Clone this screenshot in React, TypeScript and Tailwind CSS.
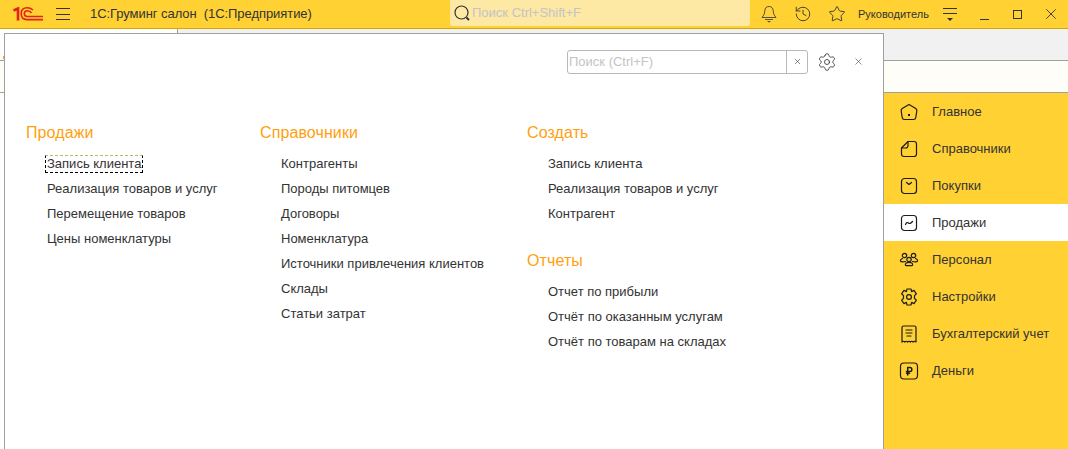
import { History, Star, Settings, X } from "lucide-react";

const sideItems = ["Главное", "Справочники", "Покупки", "Продажи", "Персонал", "Настройки", "Бухгалтерский учет", "Деньги"];

const SideIcon = ({ index }: { index: number }) => {
  const common = { width: 20, height: 20, viewBox: "0 0 20 20", fill: "none", stroke: "#1c1c1c", strokeWidth: 1.2, strokeLinejoin: "round" as const, strokeLinecap: "round" as const };
  switch (index) {
    case 0:
      return (
        <svg {...common}>
          <path d="M10 2.5 L16.8 6.5 Q18 7.3 17.8 9 L16.8 15.5 Q16.5 17.5 14.5 17.5 H5.5 Q3.5 17.5 3.2 15.5 L2.2 9 Q2 7.3 3.2 6.5 Z" />
          <rect x="9" y="12" width="2" height="2" fill="#1c1c1c" stroke="none" />
        </svg>
      );
    case 1:
      return (
        <svg {...common}>
          <path d="M9 2.5 H15 Q17.5 2.5 17.5 5 V15 Q17.5 17.5 15 17.5 H5 Q2.5 17.5 2.5 15 V9 Z" />
          <path d="M2.5 9 H6.5 Q9 9 9 6.5 V2.5" />
        </svg>
      );
    case 2:
      return (
        <svg {...common}>
          <rect x="2.5" y="2.5" width="15" height="15" rx="3" />
          <path d="M7.5 6.5 L10 8.5 L12.5 6.5" />
        </svg>
      );
    case 3:
      return (
        <svg {...common}>
          <rect x="2.5" y="2.5" width="15" height="15" rx="3" />
          <path d="M6.5 11.5 Q8 8.5 9.5 10 T13.5 8.5" />
        </svg>
      );
    case 4:
      return (
        <svg {...common}>
          <circle cx="5.5" cy="5.5" r="2.2" />
          <circle cx="14.5" cy="5.5" r="2.2" />
          <circle cx="10" cy="9.5" r="2.2" />
          <path d="M3.5 8.5 Q1 9.5 1.5 11 Q2 12.3 6.5 11.5" />
          <path d="M16.5 8.5 Q19 9.5 18.5 11 Q18 12.3 13.5 11.5" />
          <path d="M7 13 Q5.5 15.5 7.5 15.7 H12.5 Q14.5 15.5 13 13 Q10 11.8 7 13 Z" />
        </svg>
      );
    case 5:
      return (
        <svg {...common}>
          <path d="M8 2 H12 L12.6 4.6 L15 3.4 L17.4 6.8 L15.5 8.6 V11.4 L17.4 13.2 L15 16.6 L12.6 15.4 L12 18 H8 L7.4 15.4 L5 16.6 L2.6 13.2 L4.5 11.4 V8.6 L2.6 6.8 L5 3.4 L7.4 4.6 Z" />
          <circle cx="10" cy="10" r="2.4" />
        </svg>
      );
    case 6:
      return (
        <svg {...common}>
          <path d="M3 18 V3.5 Q3 2 4.5 2 H15.5 Q17 2 17 3.5 V18 Q15.6 16.5 14.2 18 Q12.8 16.5 11.4 18 Q10 16.5 8.6 18 Q7.2 16.5 5.8 18 Q4.4 16.5 3 18 Z" />
          <path d="M7 6 H13 M7 9 H13 M8 12 H12" />
        </svg>
      );
    default:
      return (
        <svg {...common}>
          <rect x="1.5" y="2" width="17" height="16" rx="3.5" />
          <path d="M8.7 14 V6.5 H11 Q12.8 6.5 12.8 8.5 Q12.8 10.5 11 10.5 H7.5 M7.5 12.3 H10.5" strokeWidth={1.5} />
        </svg>
      );
  }
};

const Logo = () => (
  <svg width="30" height="14" viewBox="0 0 30 14" fill="none" stroke="#e2231a" className="-mt-[1px]">
    <path d="M0.5 3.5 L5 1.5 V13.5" strokeWidth="2.6" />
    <path d="M20 3 Q17.5 0.8 14 0.8 Q8.2 0.8 8.2 6.6 Q8.2 12.6 14 12.6 H30" strokeWidth="1.6" />
    <path d="M18.5 6 Q17 3.8 14.5 3.8 Q11.3 3.8 11.3 6.7 Q11.3 9.5 14.5 9.5 H30" strokeWidth="1.6" />
  </svg>
);

const BellIcon = () => (
  <svg width="16" height="18" viewBox="0 0 16 18" fill="none" stroke="#444444" strokeWidth="0.9" strokeLinejoin="round">
    <path d="M8 1.5 Q4 1.5 3.8 6 Q3.7 10 1 12.5 H15 Q12.3 10 12.2 6 Q12 1.5 8 1.5 Z" />
    <path d="M4 14.5 H12" />
    <path d="M6 16 H10 L8 17.5 Z" fill="#444444" stroke="none" />
  </svg>
);

const Section = ({ title, items, className = "" }: { title: string; items: string[]; className?: string }) => (
  <div className={className}>
    <h2 className="text-[16px] leading-[20px] tracking-[0.1px] text-[#ff9f10]">{title}</h2>
    <ul className="mt-[8px] pl-[21px]">
      {items.map((item, i) => (
        <li key={item} className="h-[25px] leading-[25px] whitespace-nowrap">
          {title === "Продажи" && i === 0 ? (
            <span className="-ml-[2px] inline-block h-[18px] leading-[16px] pl-[1px] pr-[1px] align-middle -mt-[2px] border border-dashed border-black border-t-[#b9b96a]">{item}</span>
          ) : (
            item
          )}
        </li>
      ))}
    </ul>
  </div>
);

export default function App() {
  return (
    <div className="w-[1068px] h-[449px] overflow-hidden flex flex-col bg-white text-[13px] text-[#333333] font-['Liberation_Sans',Arial,sans-serif]">
      <header className="h-[29px] shrink-0 flex items-center bg-[#ffd133] border-b border-[#d4a60a]">
        <div className="ml-[13px] w-[30px] flex"><Logo /></div>
        <div className="ml-[13px] w-[14px] flex flex-col gap-[4.5px]">
          <div className="h-px bg-[#333333]" />
          <div className="h-px bg-[#333333]" />
          <div className="h-px bg-[#333333]" />
        </div>
        <div className="ml-[20px] w-[360px] text-[13px] tracking-[-0.06px] whitespace-pre">1С:Груминг салон  (1С:Предприятие)</div>
        <div className="w-[300px] h-[26px] -mt-[3px] flex items-center bg-[#fde8a4] rounded-b-[2px]">
          <svg width="20" height="20" viewBox="0 0 20 20" fill="none" stroke="#333333" className="ml-[2px]">
            <circle cx="9.5" cy="9.5" r="6.5" strokeWidth="1.2" />
            <path d="M14.5 14.5 L17 17" strokeWidth="2" />
          </svg>
          <span className="text-[#c4c4c4]">Поиск Ctrl+Shift+F</span>
        </div>
        <div className="ml-[11px] flex"><BellIcon /></div>
        <History size={18} strokeWidth={1.2} className="ml-[17px]" />
        <Star size={18} strokeWidth={1.2} className="ml-[16px]" />
        <span className="ml-[12px] text-[11px] text-[#333333]">Руководитель</span>
        <div className="ml-[14px] w-[14px] flex flex-col items-center gap-[4px]">
          <div className="h-px w-[14px] bg-[#333333]" />
          <div className="h-px w-[14px] bg-[#333333]" />
          <div className="w-0 h-0 border-x-[3px] border-t-[3px] border-x-transparent border-t-[#333333]" />
        </div>
        <div className="ml-[23px] mt-[10px] w-[9px] h-px bg-[#333333]" />
        <div className="ml-[24px] w-[9px] h-[9px] border border-[#333333]" />
        <svg width="10" height="10" viewBox="0 0 10 10" stroke="#333333" strokeWidth="0.9" className="ml-[24px]">
          <path d="M0.3 0.3 L9.7 9.7 M9.7 0.3 L0.3 9.7" />
        </svg>
      </header>

      <div className="relative flex-1 flex flex-col min-h-0">
        <div className="h-[32px] shrink-0 flex border-b border-[#a0a0a0]">
          <div className="relative w-[178px] border-r border-[#a0a0a0]">
            <div className="absolute left-[3px] bottom-[1px] w-px h-[3px] bg-[#ff9f10]" />
          </div>
          <div className="flex-1 bg-[#f1f1f1]" />
        </div>
        <div className="h-[32px] shrink-0 bg-[#fffdf7] border-b border-[#a0a0a0]" />
        <div className="flex-1 flex min-h-0">
          <div className="flex-1" />
          <nav className="w-[185px] bg-[#ffd133] border-l border-[#a0a0a0]">
            {sideItems.map((item, i) => (
              <div key={item} className={`h-[37px] flex items-center pl-[15px] ${i === 3 ? "bg-white" : ""}`}>
                <SideIcon index={i} />
                <span className="ml-[13px] whitespace-nowrap">{item}</span>
              </div>
            ))}
          </nav>
        </div>

        {/* Всплывающая панель раздела */}
        <div className="absolute left-[4px] top-[4px] bottom-0 w-[880px] bg-white border-x border-t border-[#a0a0a0]">
          <div className="flex items-center justify-end h-[57px] pb-[4px] pr-[19px]">
            <div className="flex w-[241px] h-[24px] mt-[2px] border border-[#b8b8b8] rounded-[3px] bg-white">
              <span className="flex-1 pl-[1px] leading-[22px] text-[#c4c4c4]">Поиск (Ctrl+F)</span>
              <div className="w-[21px] flex items-center justify-center border-l border-[#b8b8b8]">
                <X size={9} strokeWidth={1.5} />
              </div>
            </div>
            <Settings size={20} strokeWidth={1} className="ml-[9px] mt-[2px]" />
            <X size={11} strokeWidth={1.2} className="ml-[16px] mt-[2px]" />
          </div>
          <div className="flex pl-[21px] pt-[32px]">
            <Section className="w-[234px]" title="Продажи" items={["Запись клиента", "Реализация товаров и услуг", "Перемещение товаров", "Цены номенклатуры"]} />
            <Section className="w-[267px]" title="Справочники" items={["Контрагенты", "Породы питомцев", "Договоры", "Номенклатура", "Источники привлечения клиентов", "Склады", "Статьи затрат"]} />
            <div className="flex flex-col gap-[25px]">
              <Section title="Создать" items={["Запись клиента", "Реализация товаров и услуг", "Контрагент"]} />
              <Section title="Отчеты" items={["Отчет по прибыли", "Отчёт по оказанным услугам", "Отчёт по товарам на складах"]} />
            </div>
          </div>
        </div>
      </div>
    </div>
  );
}
